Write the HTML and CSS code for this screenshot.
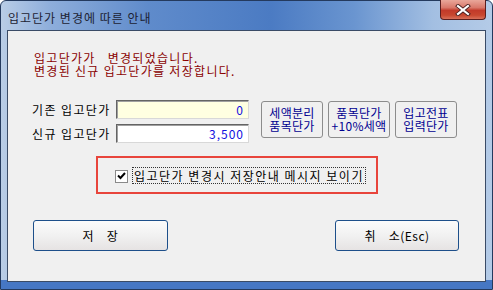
FILE: index.html
```html
<!DOCTYPE html>
<html>
<head>
<meta charset="utf-8">
<link rel="stylesheet" href="styles.css">
</head>
<body>
<div class="window">
  <div class="titlebar">
    <span class="title">입고단가 변경에 따른 안내</span>
    <div class="close"><svg width="16" height="12" viewBox="0 0 16 12"><path d="M3 2 L13 10 M13 2 L3 10" stroke="#4a2020" stroke-width="4" stroke-linecap="square"/><path d="M3 2 L13 10 M13 2 L3 10" stroke="#ffffff" stroke-width="2.2" stroke-linecap="square"/></svg></div>
  </div>
  <div class="client">
    <div class="msg">
      <div>입고단가가&nbsp;&nbsp; 변경되었습니다.</div>
      <div>변경된 신규 입고단가를 저장합니다.</div>
    </div>
    <div class="form">
      <div class="fields">
        <div class="row"><span class="label">기존 입고단가</span><div class="input old">0</div></div>
        <div class="row"><span class="label">신규 입고단가</span><div class="input">3,500</div></div>
      </div>
      <div class="tools">
        <div class="tool">세액분리<br>품목단가</div>
        <div class="tool">품목단가<br>+10%세액</div>
        <div class="tool">입고전표<br>입력단가</div>
      </div>
    </div>
    <div class="highlight">
      <span class="check"><svg width="9" height="8" viewBox="0 0 9 8"><path d="M1 3.5 L3.5 6 L8 1" stroke="#000" stroke-width="2" fill="none"/></svg></span>
      <span class="check-label">입고단가 변경시 저장안내 메시지 보이기</span>
    </div>
    <div class="actions">
      <div class="btn save">저&nbsp;&nbsp;&nbsp;&nbsp;장</div>
      <div class="btn cancel">취&nbsp;&nbsp;&nbsp;&nbsp;소(Esc)</div>
    </div>
  </div>
</div>
</body>
</html>
```

FILE: styles.css
```css
* { box-sizing: border-box; }
html, body { margin: 0; padding: 0; }
body {
  width: 493px;
  height: 290px;
  overflow: hidden;
  font-family: "Noto Sans CJK KR", "Noto Sans", sans-serif;
  font-size: 12px;
  background: #ffffff;
}
.window {
  position: relative;
  width: 493px;
  height: 290px;
  border: 1px solid #243a5e;
  border-radius: 6px 6px 0 0;
  background: linear-gradient(90deg, #b9cde6 0%, #8eaedb 10%, #5f8bcb 30%, #4b7bc3 55%, #6a95d0 72%, #a3bfe2 88%, #b4cbe7 100%);
  display: flex;
  flex-direction: column;
  padding: 0 6px 7px 6px;
}
.window::after {
  content: "";
  position: absolute;
  left: 0; right: 0; bottom: 0;
  height: 9px;
  background: #4677c4;
  z-index: 0;
}
.titlebar {
  height: 29px;
  display: flex;
  align-items: flex-start;
  position: relative;
}
.title {
  margin-top: 8px;
  margin-left: 1px;
  font-size: 12px;
  color: #1c2233;
  letter-spacing: 1px;
}
.close {
  position: absolute;
  right: 0px;
  top: -1px;
  width: 46px;
  height: 20px;
  border: 1px solid #5a1e1e;
  border-top: none;
  border-radius: 0 0 4px 4px;
  background: linear-gradient(180deg, #e9a79a 0%, #d9786a 40%, #c23a2a 55%, #c8472f 80%, #d9705a 100%);
  display: flex;
  align-items: center;
  justify-content: center;
}
.client {
  position: relative;
  z-index: 1;
  flex: 1;
  background: #f0f0f0;
  border: 1px solid #3a4b66;
  display: flex;
  flex-direction: column;
}
.msg {
  margin: 20px 0 0 26px;
  color: #8a0000;
  line-height: 13px;
  font-size: 12px;
  letter-spacing: 1.3px;
}
.form {
  display: flex;
  margin: 23px 0 0 24px;
}
.fields {
  display: flex;
  flex-direction: column;
  gap: 5px;
}
.row {
  display: flex;
  align-items: center;
}
.label {
  width: 84px;
  color: #000;
  font-size: 12px;
  letter-spacing: 1.4px;
}
.input {
  width: 133px;
  height: 19px;
  border-top: 1px solid #646464;
  border-left: 1px solid #646464;
  border-right: 1px solid #d8d8d8;
  border-bottom: 1px solid #d8d8d8;
  box-shadow: inset 1px 1px 0 #a0a0a0;
  background: #ffffff;
  color: #1010e0;
  text-align: right;
  padding-right: 4px;
  line-height: 17px;
  font-size: 12px;
  letter-spacing: 1px;
}
.input.old { background: #ffffe1; }
.tools {
  display: flex;
  gap: 5px;
  margin-left: 12px;
  margin-top: 1px;
}
.tool {
  width: 62px;
  height: 37px;
  border: 1px solid #8c8c8c;
  border-radius: 3px;
  background: #f0f0f0;
  color: #000090;
  text-align: center;
  line-height: 13px;
  padding-top: 4px;
  font-size: 12px;
  letter-spacing: 0.3px;
}
.highlight {
  margin: 13px 0 0 88px;
  width: 282px;
  height: 38px;
  border: 2px solid #e8453c;
  display: flex;
  align-items: center;
  padding-left: 17px;
}
.check {
  width: 13px;
  height: 13px;
  border: 1px solid #8a8a8a;
  background: #fff;
  display: flex;
  align-items: center;
  justify-content: center;
  margin-top: 2px;
}
.check-label {
  margin-left: 4px;
  border: 1px dotted #333;
  padding: 0 1px;
  height: 17px;
  line-height: 15px;
  color: #000;
  letter-spacing: 1.5px;
}
.actions {
  display: flex;
  justify-content: space-between;
  margin: 26px 0 0 25px;
  width: 426px;
}
.btn {
  height: 31px;
  border: 1px solid #1d4f8a;
  border-radius: 3px;
  background: linear-gradient(180deg, #fbfbfb 0%, #f1f1f1 50%, #e6e3e3 100%);
  display: flex;
  align-items: center;
  justify-content: center;
  color: #000;
  font-size: 12px;
  letter-spacing: 0.5px;
}
.save { width: 135px; }
.cancel { width: 124px; }
```
